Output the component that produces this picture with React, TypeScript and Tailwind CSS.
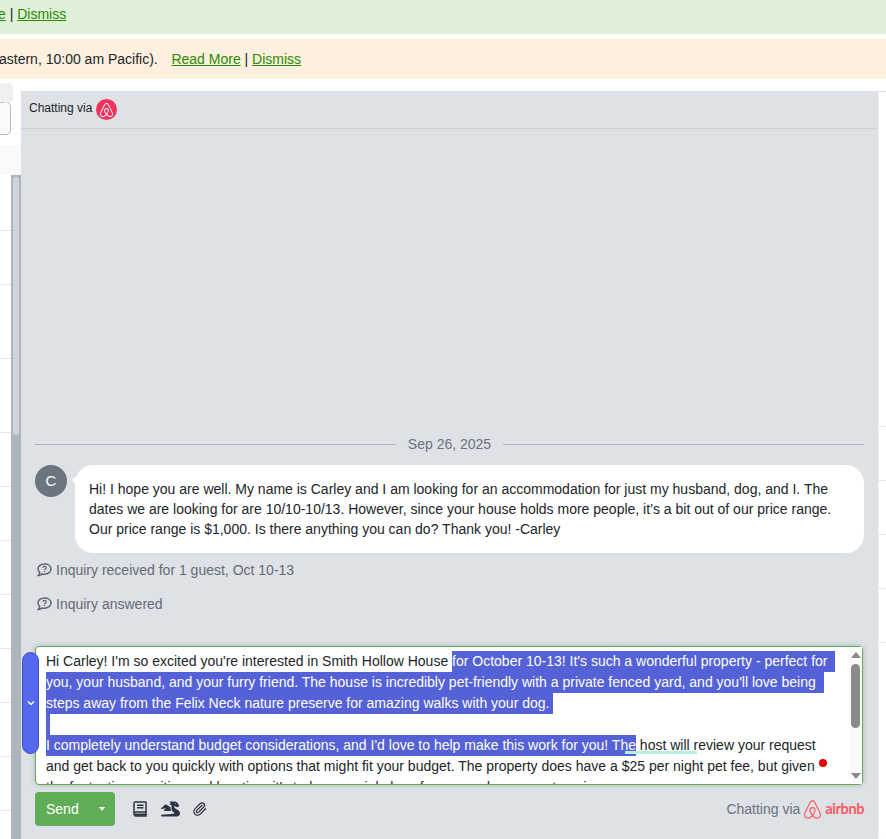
import React from 'react';
import { FaAirbnb } from 'react-icons/fa';
import { FaDragon } from 'react-icons/fa6';
import { Paperclip } from 'lucide-react';

const rowHeights = [56, 54, 74, 74, 54, 54, 54, 54, 54, 54, 54, 54];
const rightRowHeights = [335, 54, 54, 54, 54];

const Sel: React.FC<{ children?: React.ReactNode }> = ({ children }) => (
  <span className="inline-block h-[21px] bg-[#5561d6] text-white align-top whitespace-pre">{children}</span>
);

const BookIcon = () => (
  <svg width="14" height="16" viewBox="0 0 14 16" fill="none" stroke="#2c3440" strokeWidth="1.5">
    <path d="M1 12.5V2.2C1 1.5 1.5 1 2.2 1H12.6c.2 0 .4.2.4.4V11H2.6C1.7 11 1 11.7 1 12.5S1.7 15 2.6 15H13v-4" />
    <path d="M4 4.2h6.5M4 6.8h6.5" />
    <path d="M1.5 12.6H13v2.2H2.5z" fill="#2c3440" stroke="none" />
  </svg>
);

const InquiryIcon = () => (
  <svg width="15" height="14" viewBox="0 0 15 14" fill="none" stroke="#5f6670" strokeWidth="1.5" className="shrink-0">
    <path d="M7.5 1C3.9 1 1 3 1 5.9c0 1.4.7 2.5 1.7 3.4-.1 1.1-.7 2.3-1.4 3.2 1.5-.1 3-.8 3.9-1.6.8.2 1.5.3 2.3.3 3.6 0 6.5-2.3 6.5-5.3S11.1 1 7.5 1z" />
    <path d="M5.8 4.7c.1-.9.8-1.4 1.7-1.4 1 0 1.7.6 1.7 1.4 0 1.3-1.7 1.2-1.7 2.5M7.5 8v1" strokeWidth="1.2" />
  </svg>
);

const InquiryRow: React.FC<{ text: string; className: string }> = ({ text, className }) => (
  <div className={`flex items-center h-5 pl-[2px] gap-[4px] text-sm text-[#646b75] ${className}`}>
    <InquiryIcon />
    <span>{text}</span>
  </div>
);

const Composer = () => (
  <div className="relative mr-px mt-8 h-[139px] flex bg-white border border-[#63a95c] rounded-[4px] shadow-[0_0_5px_rgba(70,100,70,0.35)] text-sm text-[#212529]">
    <div className="flex-1 min-w-0 overflow-hidden pt-[4px] pl-[10px] whitespace-pre leading-[21px]">
      <div className="h-[21px]">
        Hi Carley! I'm so excited you're interested in Smith Hollow House <Sel>for October 10-13! It's such a wonderful property - perfect for  </Sel>
      </div>
      <div className="h-[21px]">
        <Sel>you, your husband, and your furry friend. The house is incredibly pet-friendly with a private fenced yard, and you'll love being  </Sel>
      </div>
      <div className="h-[21px]">
        <Sel>steps away from the Felix Neck nature preserve for amazing walks with your dog. </Sel>
      </div>
      <div className="h-[21px]">
        <span className="inline-block h-[21px] w-1 bg-[#5561d6] align-top" />
      </div>
      <div className="relative h-[21px]">
        <Sel>I completely understand budget considerations, and I'd love to help make this work for you! The</Sel> host will review your request
        <span className="absolute left-[579px] top-[16px] h-[3px] w-[72px] bg-[#b5f0de]" />
      </div>
      <div className="relative h-[21px]">
        and get back to you quickly with options that might fit your budget. The property does have a $25 per night pet fee, but given
        <span className="absolute left-[773px] top-[3px] h-2 w-2 rounded-full bg-[#e60000]" />
      </div>
      <div className="h-[21px]">the fantastic amenities and location, it's truly a special place for you and your pup to enjoy.</div>
    </div>
    <div className="w-[13px] shrink-0 bg-[#fafafa] flex flex-col items-center py-[5px]">
      <span className="w-0 h-0 border-x-[5px] border-x-transparent border-b-[6px] border-b-[#8a8a8a]" />
      <span className="w-[9px] h-16 mt-[6px] mb-auto rounded-full bg-[#8a8a8a]" />
      <span className="w-0 h-0 border-x-[5px] border-x-transparent border-t-[6px] border-t-[#8a8a8a]" />
    </div>
    <button className="absolute -left-[14px] top-[5px] w-[17px] h-[102px] rounded-full bg-[#5468f0] border border-[#3f51b5] flex items-center justify-center text-white">
      <svg width="8" height="6" viewBox="0 0 8 6" fill="none" stroke="currentColor" strokeWidth="1.5">
        <path d="M1 1.5l3 3 3-3" />
      </svg>
    </button>
  </div>
);

const Footer = () => (
  <div className="mt-[7px] mb-[13px] h-[34px] flex items-center">
    <button className="w-20 h-[34px] rounded-[4px] bg-[#5fae57] text-white text-sm font-normal flex items-center pl-[11px]">
      <span>Send</span>
      <span className="ml-[20px] w-0 h-0 border-x-[3.5px] border-x-transparent border-t-[4px] border-t-white" />
    </button>
    <div className="ml-[18px] flex items-center text-[#2c3440]">
      <BookIcon />
      <FaDragon className="ml-[14px] w-[19px] h-[16px]" />
      <Paperclip className="ml-[12px] w-[15px] h-[16px]" strokeWidth={2} />
    </div>
    <div className="ml-auto flex items-center text-sm text-[#6b7280]">
      <span>Chatting via</span>
      <FaAirbnb className="ml-[3px] w-[19px] h-[21px] text-[#ff5a5f]" />
      <span className="ml-[3px] text-[14.5px] font-bold tracking-[-0.4px] text-[#ff5a5f] font-['Lato',sans-serif]">airbnb</span>
    </div>
  </div>
);

const ChatPanel = () => (
  <div className="flex-1 min-w-0 flex flex-col bg-[#dee1e6]">
    <div className="h-[38px] shrink-0 border-b border-[#cdd0d6] flex items-center pl-2 text-xs text-[#212529]">
      <span className="mb-[3px]">Chatting via</span>
      <span className="ml-1 w-[21px] h-[21px] rounded-full bg-[#f5315c] flex items-center justify-center text-white">
        <FaAirbnb className="w-[15px] h-[16px]" />
      </span>
    </div>
    <div className="flex-1" />
    <div className="px-[14px] flex flex-col">
      <div className="flex items-center h-5 text-sm text-[#6b7280]">
        <div className="flex-1 h-px bg-[#adb5bd]" />
        <span className="px-3">Sep 26, 2025</span>
        <div className="flex-1 h-px bg-[#adb5bd]" />
      </div>
      <div className="mt-[11px] flex items-start">
        <div className="w-8 h-8 shrink-0 rounded-full bg-[#6c757d] flex items-center justify-center text-white text-[15px]">C</div>
        <div className="relative ml-2 flex-1 bg-white rounded-[18px] px-[14px] py-[14px] text-sm leading-5 text-[#212529]">
          <span className="absolute -left-[3px] top-[11px] w-0 h-0 border-y-[4px] border-y-transparent border-r-[4px] border-r-white" />
          Hi! I hope you are well. My name is Carley and I am looking for an accommodation for just my husband, dog, and I. The dates we are looking for are 10/10-10/13. However, since your house holds more people, it’s a bit out of our price range. Our price range is $1,000. Is there anything you can do? Thank you! -Carley
        </div>
      </div>
      <InquiryRow text="Inquiry received for 1 guest, Oct 10-13" className="mt-[7px]" />
      <InquiryRow text="Inquiry answered" className="mt-[14px]" />
      <Composer />
      <Footer />
    </div>
  </div>
);

const LeftRail = () => (
  <div className="relative w-[21px] shrink-0 flex flex-col bg-white">
    <div className="h-[54px] shrink-0 pt-[11px]">
      <div className="w-[11px] h-[33px] bg-[#fafafa] border border-l-0 border-[#b5bac2] rounded-r-[5px]" />
    </div>
    <div className="h-[30px] shrink-0 bg-[#f8f9fa]" />
    <div className="flex-1 min-h-0 flex">
      <div className="w-[11px] overflow-hidden">
        {rowHeights.map((h, i) => (
          <div key={i} className="border-b border-[#e4e6ea]" style={{ height: h }} />
        ))}
      </div>
      <div className="w-[10px] bg-[#adb5bd] px-[2px] pt-[2px]">
        <div className="h-[258px] rounded-full bg-[#ced4da]" />
      </div>
    </div>
    <div className="absolute left-0 -top-2 w-[13px] h-5 bg-[#eceded]/90 rounded-r-[5px] rounded-b-[5px]" />
  </div>
);

const RightRail = () => (
  <div className="w-2 shrink-0 bg-white border-t border-[#dee1e6] shadow-[inset_1px_0_1px_rgba(0,0,0,0.06)] overflow-hidden">
    {rightRowHeights.map((h, i) => (
      <div key={i} className="border-b border-[#e4e6ea]" style={{ height: h }} />
    ))}
  </div>
);

export default function App() {
  return (
    <div className="w-[886px] h-[839px] overflow-hidden flex flex-col bg-white font-['Liberation_Sans',Arial,sans-serif] text-sm text-[#212529]">
      <div className="h-[34px] shrink-0 bg-[#e0efd8] pt-[5px] leading-[18px] whitespace-pre -indent-[2px]">
        <a className="underline text-[#2b8a00]">e</a>{' | '}<a className="underline text-[#2b8a00]">Dismiss</a>
      </div>
      <div className="mt-[5px] h-10 shrink-0 bg-[#fdf0de] leading-10 whitespace-pre -indent-[1px]">
        {'astern, 10:00 am Pacific).   '}<a className="ml-[2px] underline text-[#2b8a00]">Read More</a>{' | '}<a className="underline text-[#2b8a00]">Dismiss</a>
      </div>
      <div className="mt-3 flex-1 min-h-0 flex">
        <LeftRail />
        <ChatPanel />
        <RightRail />
      </div>
    </div>
  );
}
